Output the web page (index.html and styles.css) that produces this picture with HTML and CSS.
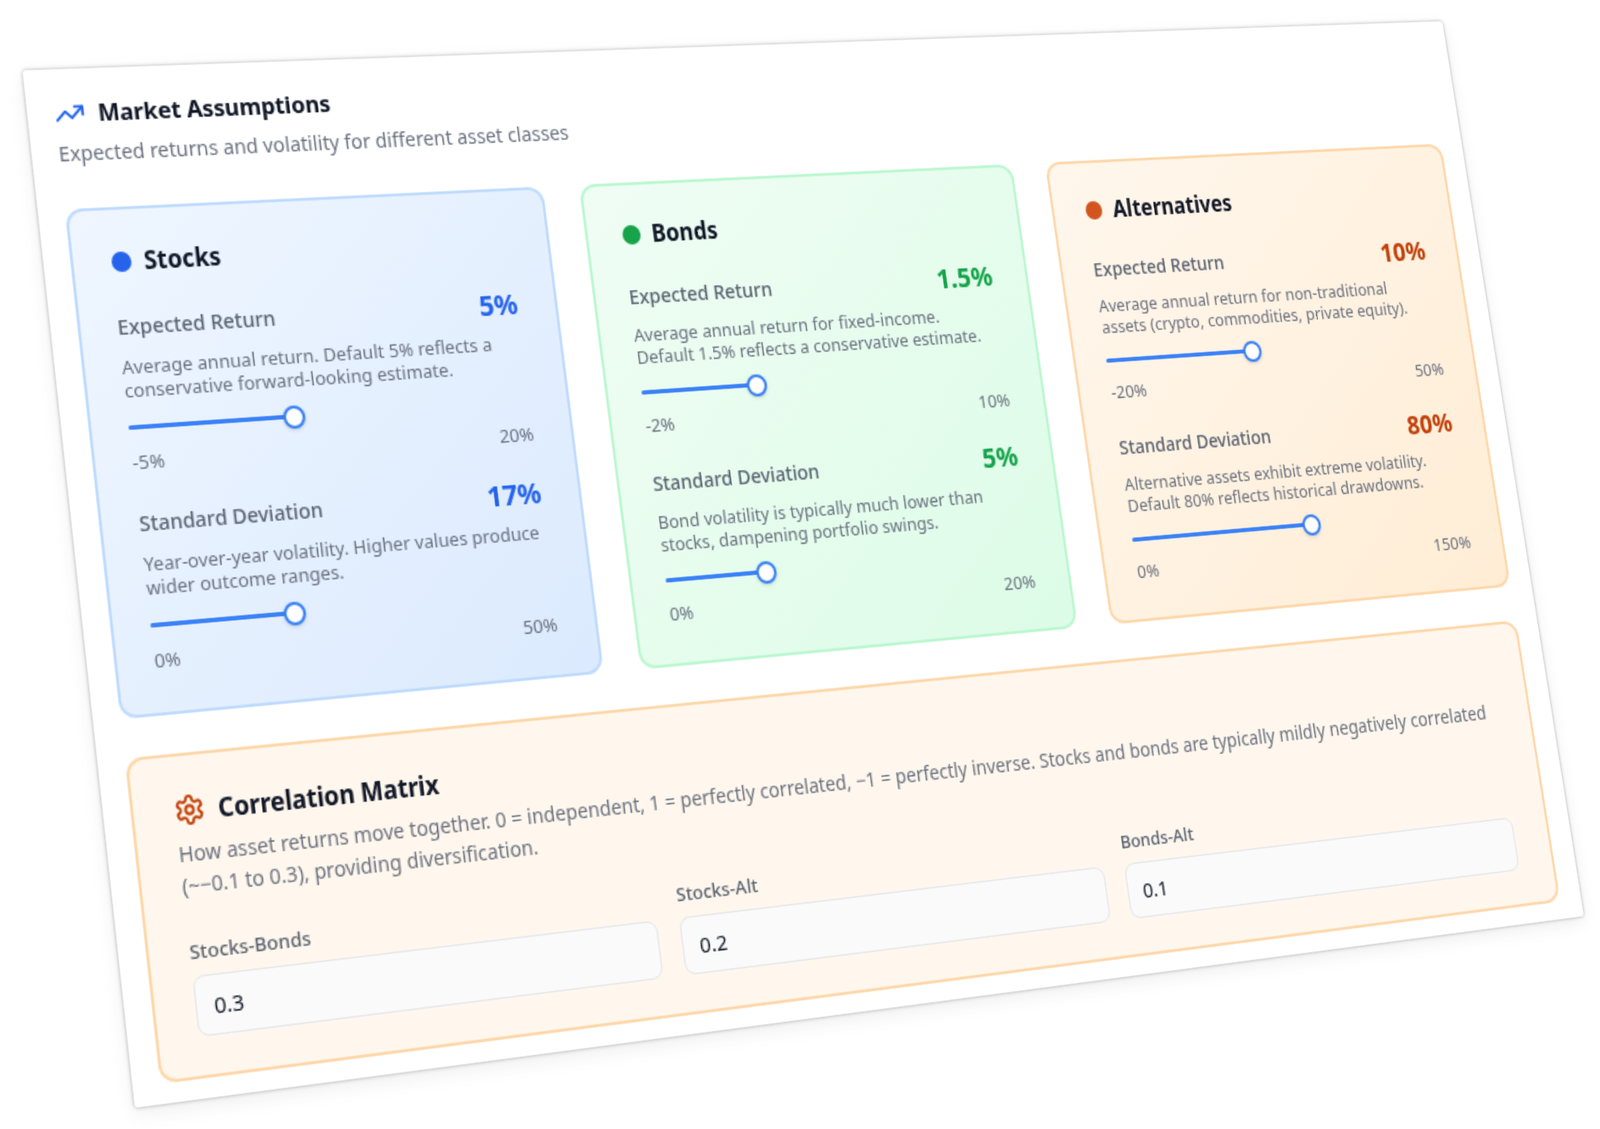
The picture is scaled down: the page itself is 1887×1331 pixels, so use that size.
FILE: index.html
```html
<!DOCTYPE html>
<html lang="en">
<head>
  <meta charset="UTF-8">
  <title>Market Assumptions</title>
  <link rel="stylesheet" href="styles.css">
</head>
<body>

<section class="sheet">
  <header class="sheet-head">
    <h2 class="sheet-title">
      <svg class="icon icon-blue" viewBox="0 0 24 24"><polyline points="22 7 13.5 15.5 8.5 10.5 2 17"/><polyline points="16 7 22 7 22 13"/></svg>
      Market Assumptions
    </h2>
    <p class="sheet-sub">Expected returns and volatility for different asset classes</p>
  </header>

  <div class="assets">
    <article class="asset asset-blue">
      <h3 class="asset-name"><span class="dot"></span>Stocks</h3>
      <div class="param">
        <div class="param-top"><span class="param-label">Expected Return</span><span class="param-value">5%</span></div>
        <p class="param-desc">Average annual return. Default 5% reflects a conservative forward-looking estimate.</p>
        <div class="slider"><div class="slider-fill" style="width:40.5%"><span class="slider-thumb"></span></div></div>
        <div class="range"><span>-5%</span><span>20%</span></div>
      </div>
      <div class="param">
        <div class="param-top"><span class="param-label">Standard Deviation</span><span class="param-value">17%</span></div>
        <p class="param-desc">Year-over-year volatility. Higher values produce wider outcome ranges.</p>
        <div class="slider"><div class="slider-fill" style="width:35%"><span class="slider-thumb"></span></div></div>
        <div class="range"><span>0%</span><span>50%</span></div>
      </div>
    </article>

    <article class="asset asset-green">
      <h3 class="asset-name"><span class="dot"></span>Bonds</h3>
      <div class="param">
        <div class="param-top"><span class="param-label">Expected Return</span><span class="param-value">1.5%</span></div>
        <p class="param-desc">Average annual return for fixed-income.<br>Default 1.5% reflects a conservative estimate.</p>
        <div class="slider"><div class="slider-fill" style="width:31%"><span class="slider-thumb"></span></div></div>
        <div class="range"><span>-2%</span><span>10%</span></div>
      </div>
      <div class="param">
        <div class="param-top"><span class="param-label">Standard Deviation</span><span class="param-value">5%</span></div>
        <p class="param-desc">Bond volatility is typically much lower than stocks, dampening portfolio swings.</p>
        <div class="slider"><div class="slider-fill" style="width:27%"><span class="slider-thumb"></span></div></div>
        <div class="range"><span>0%</span><span>20%</span></div>
      </div>
    </article>

    <article class="asset asset-orange">
      <h3 class="asset-name"><span class="dot"></span>Alternatives</h3>
      <div class="param">
        <div class="param-top"><span class="param-label">Expected Return</span><span class="param-value">10%</span></div>
        <p class="param-desc">Average annual return for non-traditional assets (crypto, commodities, private equity).</p>
        <div class="slider"><div class="slider-fill" style="width:43%"><span class="slider-thumb"></span></div></div>
        <div class="range"><span>-20%</span><span>50%</span></div>
      </div>
      <div class="param">
        <div class="param-top"><span class="param-label">Standard Deviation</span><span class="param-value">80%</span></div>
        <p class="param-desc">Alternative assets exhibit extreme volatility. Default 80% reflects historical drawdowns.</p>
        <div class="slider"><div class="slider-fill" style="width:53%"><span class="slider-thumb"></span></div></div>
        <div class="range"><span>0%</span><span>150%</span></div>
      </div>
    </article>
  </div>

  <div class="matrix">
    <h3 class="matrix-title">
      <svg class="icon icon-orange" viewBox="0 0 24 24"><path d="M12.22 2h-.44a2 2 0 0 0-2 2v.18a2 2 0 0 1-1 1.73l-.43.25a2 2 0 0 1-2 0l-.15-.08a2 2 0 0 0-2.73.73l-.22.38a2 2 0 0 0 .73 2.73l.15.1a2 2 0 0 1 1 1.72v.51a2 2 0 0 1-1 1.74l-.15.09a2 2 0 0 0-.73 2.73l.22.38a2 2 0 0 0 2.73.73l.15-.08a2 2 0 0 1 2 0l.43.25a2 2 0 0 1 1 1.73V20a2 2 0 0 0 2 2h.44a2 2 0 0 0 2-2v-.18a2 2 0 0 1 1-1.73l.43-.25a2 2 0 0 1 2 0l.15.08a2 2 0 0 0 2.73-.73l.22-.39a2 2 0 0 0-.73-2.73l-.15-.08a2 2 0 0 1-1-1.74v-.5a2 2 0 0 1 1-1.74l.15-.09a2 2 0 0 0 .73-2.73l-.22-.38a2 2 0 0 0-2.73-.73l-.15.08a2 2 0 0 1-2 0l-.43-.25a2 2 0 0 1-1-1.73V4a2 2 0 0 0-2-2z"/><circle cx="12" cy="12" r="3"/></svg>
      Correlation Matrix
    </h3>
    <p class="matrix-desc">How asset returns move together. 0 = independent, 1 = perfectly correlated, −1 = perfectly inverse. Stocks and bonds are typically mildly negatively correlated (~−0.1 to 0.3), providing diversification.</p>
    <div class="matrix-fields">
      <label class="field"><span class="field-label">Stocks-Bonds</span><input class="field-input" type="text" value="0.3"></label>
      <label class="field"><span class="field-label">Stocks-Alt</span><input class="field-input" type="text" value="0.2"></label>
      <label class="field"><span class="field-label">Bonds-Alt</span><input class="field-input" type="text" value="0.1"></label>
    </div>
  </div>
</section>

</body>
</html>
```

FILE: styles.css
```css
html, body { margin: 0; height: 1331px; overflow: hidden; background: #fff; }
body { font-family: "Noto Sans", Lato, sans-serif; color: #111827; }
h2, h3, p { margin: 0; }

/* the whole sheet is tilted: W 1152 x H 696 mapped onto the four photographed corners */
.sheet {
  box-sizing: border-box;
  width: 1152px;
  height: 696px;
  padding: 17px 19px 0;
  background: #fff;
  border-radius: 2px;
  box-shadow: 0 0 3px rgba(0,0,0,.35), 0 4px 14px rgba(0,0,0,.07);
  transform-origin: 0 0;
  transform: matrix3d(1.67761, -0.047054, 0, 0.00013172, 0.18237, 1.69148, 0, -0.00005031, 0, 0, 1, 0, 26.5, 83, 0, 1);
}

.sheet-head { margin-bottom: 27.5px; }
.sheet-title { display: flex; align-items: center; gap: 9px; font-size: 16.5px; line-height: 28px; font-weight: 700; letter-spacing: -.1px; }
.sheet-sub { margin-top: 4px; font-size: 14.3px; line-height: 20px; color: #6b7280; }

.icon { width: 22px; height: 22px; flex: none; fill: none; stroke-width: 2; stroke-linecap: round; stroke-linejoin: round; }
.icon-blue { stroke: #2563eb; }
.icon-orange { stroke: #c2410c; }

.assets { display: grid; grid-template-columns: repeat(3, 1fr); gap: 28px; }

.asset { padding: 22px 28px 0 26px; border: 2px solid; border-radius: 12px; box-sizing: border-box; height: 346.5px; }
.asset-blue { background: linear-gradient(135deg, #eff6ff, #dbeafe); border-color: #bfdbfe; --accent: #2563eb; --dot: #2563eb; }
.asset-green { background: linear-gradient(135deg, #f0fdf4, #dcfce7); border-color: #bbf7d0; --accent: #16a34a; --dot: #16a34a; }
.asset-orange { background: linear-gradient(135deg, #fff7ed, #ffedd5); border-color: #fed7aa; --accent: #c2410c; --dot: #d2551f; }

.asset-name { display: flex; align-items: center; gap: 9px; font-size: 17px; line-height: 28px; font-weight: 700; margin-bottom: 17px; }
.dot { width: 14px; height: 14px; margin-left: 1px; border-radius: 50%; background: var(--dot); }

.param { margin-bottom: 20px; }
.param-top { display: flex; justify-content: space-between; align-items: center; }
.param-label { font-size: 14.4px; line-height: 20px; font-weight: 500; color: #5b6472; }
.param-value { font-size: 20px; line-height: 28px; font-weight: 700; color: var(--accent); }
.param-desc { margin: 5.5px 0 9.5px; font-size: 13.1px; line-height: 16px; color: #6b7280; }

.slider { height: 16px; display: flex; align-items: center; }
.slider-fill { position: relative; height: 3px; background: #3b82f6; border-radius: 2px; }
.slider-thumb {
  position: absolute; right: -8px; top: -6.5px;
  box-sizing: border-box; width: 16px; height: 16px;
  background: #fff; border: 2px solid #3b82f6; border-radius: 50%;
  box-shadow: 0 1px 3px rgba(0,0,0,.15);
}

.range { display: flex; justify-content: space-between; margin-top: 7px; font-size: 13.3px; line-height: 16px; color: #6b7280; }

.matrix { margin-top: 25.5px; padding: 22px 30px 25.5px 28px; border: 2px solid #fed7aa; border-radius: 12px; background: #fff7ed; }
.matrix-title { display: flex; align-items: center; gap: 9px; font-size: 17.5px; line-height: 28px; font-weight: 700; letter-spacing: -.1px; }
.matrix-desc { margin: 4.5px 0 22.5px; font-size: 14.2px; line-height: 21px; color: #6b7280; }
.matrix-fields { display: grid; grid-template-columns: repeat(3, 1fr); gap: 17px; }
.field { display: block; }
.field-label { display: block; margin-bottom: 6px; font-size: 13.4px; line-height: 20px; font-weight: 500; color: #5b6472; }
.field-input {
  box-sizing: border-box; width: 100%; height: 40px; padding: 0 12px;
  font: inherit; font-size: 15px; color: #111827;
  background: #fafafa; border: 1px solid #e5e7eb; border-radius: 8px;
}
```
